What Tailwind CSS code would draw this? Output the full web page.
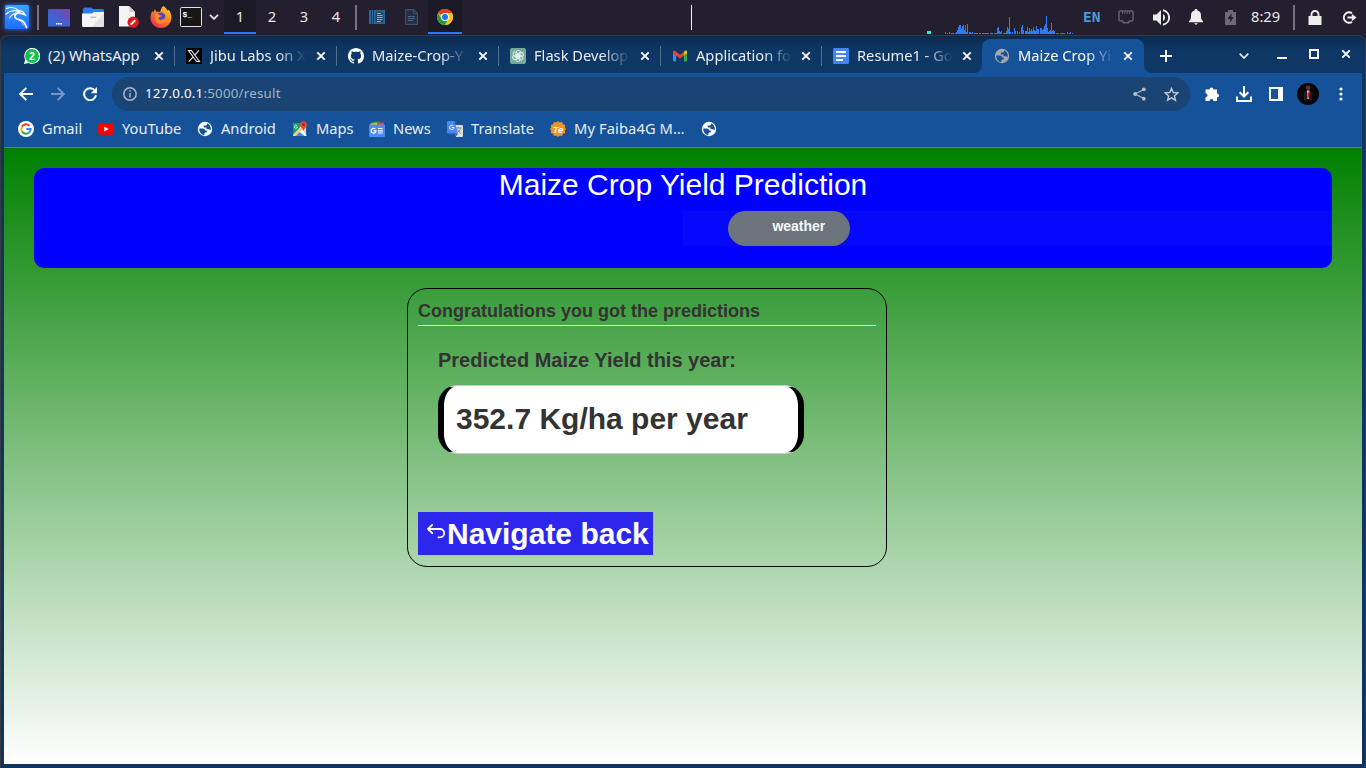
<!DOCTYPE html>
<html lang="en">
<head>
<meta charset="utf-8">
<title>Maize Crop Yield Prediction</title>
<script src="https://cdn.jsdelivr.net/npm/@tailwindcss/browser@4"></script>
</head>
<body class="w-[1366px] h-[768px] overflow-hidden bg-[#231f2e] font-['Noto_Sans',sans-serif]">
<svg class="hidden">
  <symbol id="close" viewBox="0 0 10 10"><path d="M1.3 1.3l7.4 7.4M8.700 1.300l-7.400 7.400" stroke="#fff" stroke-width="1.9" fill="none"/></symbol>
  <symbol id="globe" viewBox="0 0 16 16"><circle cx="8" cy="8" r="7.200" fill="currentColor"/><path d="M2.200 7.500H6c1.300 0 2.200 1 2.200 2h1.600v1.700c-1.200.2-2 .2-2.300 1.200l-.3 1.800C4.200 13.700 2.200 11 2.200 7.500zM10 2.300c2.400.9 3.900 3.200 3.900 5.700l-.2 1.200c-.8-.8-1.500-1-2.700-1H9.500V6.400H6.800V4.600h1.500c1 0 1.500-.4 1.700-1z" fill="var(--hole)"/></symbol>
  <symbol id="chrome" viewBox="0 0 16 16"><circle cx="8" cy="8" r="8" fill="#fbc116"/><path d="M8 8L1.070 4A8 8 0 0 1 14.930 4H8z" fill="#e33b2e"/><path d="M8 8L4.530 10 1.070 4A8 8 0 0 0 8 16l3.500-6z" fill="#279847"/><path d="M8 4h6.930A8 8 0 0 1 8 16l3.460-6z" fill="#fbc116"/><circle cx="8" cy="8" r="4" fill="#fff"/><circle cx="8" cy="8" r="3" fill="#1a73e8"/></symbol>
</svg>

<!-- Desktop panel -->
<header class="flex h-[35px] items-center text-[14.67px] text-[#e8e8ea]">
  <svg class="ml-[5px] mt-[-2px] w-[24px] h-[24px] shrink-0 shadow-[0_0_5px_#2777ff]" viewBox="0 0 24 24"><defs><linearGradient id="k" x2="0" y2="1"><stop stop-color="#3ba4ff"/><stop offset="1" stop-color="#1b6bff"/></linearGradient></defs><rect width="24" height="24" rx="1.500" fill="url(#k)"/><g fill="none" stroke="#fff" stroke-linecap="round"><path d="M1.500 3.500C6 1.500 11 3 14.500 6.500M1 9c4-3.500 9-4 13-2.300M4.500 13c2-3 5-5.300 9-5.500" stroke-width="1.100"/><path d="M14 5.500l4 1.300 2 3-3-1-3-.800" stroke-width="1.500"/><path d="M13.500 8c-4 .500-5 4.800-1.500 6 3.500 1 7.500 1 9.500 8.500" stroke-width="1.700"/><path d="M12 14c4 1.500 5.500 4 6 6" stroke-width=".8"/></g></svg>
  <i class="ml-[8px] w-[2px] h-[25px] bg-[#77747d]"></i>
  <svg class="ml-[9px] w-[22px] h-[18px] shrink-0" viewBox="0 0 22 18"><defs><linearGradient id="d" x1="0" y1="1" x2="1" y2="0"><stop stop-color="#2b6edb"/><stop offset=".5" stop-color="#4a5dcc"/><stop offset="1" stop-color="#8040a5"/></linearGradient></defs><rect width="22" height="17.500" rx="1" fill="url(#d)"/><path d="M8 14.800h1.500m.7 0h1.500m.7 0h1.500" stroke="#fff" stroke-width="1.400"/></svg>
  <svg class="ml-[12px] w-[22px] h-[21px] shrink-0" viewBox="0 0 22 21"><path d="M1 2a1.500 1.500 0 0 1 1.500-1.500h7l1.500 1.500h9.500a1.500 1.500 0 0 1 1.500 1.500v6H1z" fill="#2c7cf0"/><path d="M0 6.500h10l2-1.500h10v13.500a1.500 1.500 0 0 1-1.500 1.500h-19A1.500 1.500 0 0 1 0 18.500z" fill="#f5f5f5"/><path d="M22 6v12.500a1.500 1.500 0 0 1-1.500 1.500H10z" fill="#e2e2e2"/><path d="M8.500 10.300h5.500" stroke="#b6b6b6" stroke-width="1.300"/></svg>
  <svg class="ml-[14px] mt-[-2px] w-[22px] h-[22px] shrink-0" viewBox="0 0 22 22"><path d="M1 0h10l6 6v14.500H1z" fill="#f4f4f4"/><path d="M11 0l6 6h-6z" fill="#d1d1d1"/><circle cx="15.200" cy="16.200" r="5.700" fill="#d81c1c"/><path d="M12.800 18.600l4.500-4.500" stroke="#fff" stroke-width="2"/></svg>
  <svg class="ml-[10px] mt-[-2px] w-[22px] h-[22px] shrink-0" viewBox="0 0 22 22"><defs><linearGradient id="ff" x1="1" y1="0" x2=".2" y2="1"><stop stop-color="#ffe33b"/><stop offset=".45" stop-color="#ff8b20"/><stop offset="1" stop-color="#f52850"/></linearGradient></defs><path d="M13 0c2 1 3.500 2.500 4.500 4.500L19 4c2.500 4 3 7 2 10.500C19.500 19 15.500 22 11 22 5 22 .5 17.500.5 11.800c0-3 1-5.300 2-6.800l.8 1.500L5 3l1 2.500 4 .5c1-2 1-4 3-6z" fill="url(#ff)"/><circle cx="11" cy="11.300" r="4.700" fill="#5546c8"/><path d="M5 8.500c1.800-1 3.500-.5 5 .7l2 .3c-.5 1.500-2.500 1.300-3.500 2.500-.5 1.500 1.500 2.500 4.500 1.500 2-.8 3-3 2-5.500 3 3 2 8-3 9.500-5 1-8-3-7-9z" fill="#ff8d22"/></svg>
  <svg class="ml-[8px] w-[22px] h-[21px] shrink-0" viewBox="0 0 22 21"><rect x=".5" y=".5" width="21" height="19" rx="1" fill="#171717" stroke="#e3e3e3"/><text x="2.500" y="9.500" font-size="8" font-weight="bold" fill="#fff" font-family="Liberation Mono">$_</text></svg>
  <svg class="ml-[7px] mt-[-1px] w-[10px] h-[6px] shrink-0" viewBox="0 0 10 6"><path d="M1 .8l4 4 4-4" fill="none" stroke="#e8e8e8" stroke-width="1.800"/></svg>
  <div class="ml-[5px] flex h-[34px] self-start text-center leading-[33px]">
    <span class="w-[32px] h-[34px] bg-[#1c1926] border-b-2 border-[#2777ff]">1</span><span class="w-[32px]">2</span><span class="w-[32px]">3</span><span class="w-[32px]">4</span>
  </div>
  <i class="ml-[3px] w-[2px] h-[25px] bg-[#77747d]"></i>
  <svg class="ml-[12px] mt-[-1px] w-[16px] h-[14px] shrink-0" viewBox="0 0 16 14"><path d="M0 0h16v14H0z" fill="#28669c"/><path d="M2.500 0v14M4.500 0v14" stroke="#183b5d"/><path d="M6.500 1.500h8v11h-8z" fill="#20476b"/><path d="M8 3.500h4M8 5.500h5.500M8 7.500h5.500M8 9.500h5.500M8 11.500h4" stroke="#9eafbf" stroke-width=".9"/></svg>
  <svg class="ml-[20px] mt-[-1px] w-[13px] h-[16px] shrink-0" viewBox="0 0 13 16"><path d="M.6.600h8l3.800 4v10.800H.6z" fill="#262d42" stroke="#3b4f70" stroke-width="1.200"/><path d="M8.500.600v4h4" fill="none" stroke="#3b4f70"/><path d="M3 7.500h7M3 9.500h7M3 11.500h5" stroke="#4d688f"/></svg>
  <div class="ml-[10px] w-[34px] h-[34px] self-start bg-[#1c1926] border-b-2 border-[#2777ff] flex items-center justify-center pt-[2px]"><svg class="w-[16px] h-[16px]"><use href="#chrome"/></svg></div>
  <i class="ml-[229px] w-px h-[25px] bg-[#f2f2f2]"></i>
  <svg class="ml-[233px] w-[150px] h-[35px] shrink-0" viewBox="925 0 150 35"><path d="M927 31h4v3h-4z" fill="#17f5e0"/><path d="M945.500 34v-2M947.500 34v-1M949.500 34v-2M951.500 34v-1M952.500 34v-1M953.500 34v-1M955.500 34v-1M956.500 34v-2M957.500 34v-4M958.500 34v-7M959.500 34v-9M960.500 34v-9M961.500 34v-5M962.500 34v-8M963.500 34v-9M964.500 34v-4M965.500 34v-9M966.500 34v-2M967.500 34v-10M969.500 34v-2M970.500 34v-2M971.500 34v-1M972.500 34v-2M974 33.500h4M979 33.500h2M982 33.500h7M990 33.500h3M994 33.500h3M997.500 34v-6M998.500 34v-7M999.500 34v-3M1000.500 34v-2M1001.500 34v-3M1003 33.500h4M1006.500 34v-3M1007.500 34v-7M1008.500 34v-5M1009.500 34v-17M1010.500 34v-2M1012.500 34v-2M1014.500 34v-6M1015.500 34v-3M1017.500 34v-3M1019.500 34v-2M1021.500 34v-7M1022.500 34v-9M1023.500 34v-4M1025.500 34v-3M1026.500 34v-3M1027.500 34v-7M1028.500 34v-2M1029.500 34v-6M1030.500 34v-3M1031.500 34v-5M1032.500 34v-3M1033.500 34v-7M1034.500 34v-4M1035.500 34v-3M1036.500 34v-8M1037.500 34v-5M1038.500 34v-5M1040.500 34v-6M1041.500 34v-6M1042.500 34v-4M1043.500 34v-5M1044.500 34v-8M1045.500 34v-10M1046.500 34v-18M1047.500 34v-6M1048.500 34v-2M1049.500 34v-3M1050.500 34v-4M1051.500 34v-11M1052.500 34v-3M1053.500 34v-4M1054.500 34v-3M1056 33.500h3M1060 33.500h5M1067.500 34v-2M1069.500 34v-1M1070.500 34v-2M1072.500 34v-1" stroke="#2b7df5" fill="none"/></svg>
  <span class="ml-[8px] w-[19px] text-[14.500px] font-bold text-[#4b9cd8] font-['DejaVu_Sans_Mono','Liberation_Mono',monospace]">EN</span>
  <svg class="ml-[16px] mt-[-2px] w-[16px] h-[14px] shrink-0" viewBox="0 0 16 14"><path d="M2 1h12a1 1 0 0 1 1 1v8a1 1 0 0 1-1 1h-2.500l-1 1.700h-5l-1-1.700H2a1 1 0 0 1-1-1V2a1 1 0 0 1 1-1z" fill="none" stroke="#64616c" stroke-width="1.500"/><path d="M4.500 1v3M6.800 1v3M9.100 1v3M11.400 1v3" stroke="#64616c"/></svg>
  <svg class="ml-[19px] mt-[-1px] w-[17px] h-[17px] shrink-0" viewBox="0 0 17 17"><path d="M0 5.500h3.500L8 1v15l-4.500-4.500H0z" fill="#eee"/><path d="M10 5a4 4 0 0 1 0 7z" fill="#eee"/><path d="M10 1.300a7.300 7.300 0 0 1 0 14.400" fill="none" stroke="#eee" stroke-width="1.900"/></svg>
  <svg class="ml-[19px] mt-[-2px] w-[14px] h-[16px] shrink-0" viewBox="0 0 14 16"><path d="M7 0c.9 0 1.500.6 1.500 1.400C11 2 12 4 12 6.500 12 10 12.500 11 14 12v1.300H0V12c1.500-1 2-2 2-5.500C2 4 3 2 5.500 1.400 5.500.6 6.100 0 7 0z" fill="#eee"/><path d="M5 14.200h4L7 16z" fill="#eee"/></svg>
  <svg class="ml-[22px] mt-[-1px] w-[11px] h-[15px] shrink-0" viewBox="0 0 11 15"><path d="M3 0h5v2h3v13H0V2h3z" fill="#6e6b75"/><path d="M6.500 3.500L2.500 9h2.500v3.500L8.800 7H6.500z" fill="#231f2e"/></svg>
  <span class="ml-[15px] mt-[-3px] w-[31px]">8:29</span>
  <i class="ml-[11px] w-[2px] h-[25px] bg-[#77747d]"></i>
  <svg class="ml-[13px] mt-[-1px] w-[14px] h-[15px] shrink-0" viewBox="0 0 14 15"><path d="M.5 6h13v9H.5z" fill="#eee"/><path d="M3.500 7V4.500a3.500 3.500 0 0 1 7 0V7" fill="none" stroke="#eee" stroke-width="1.900"/></svg>
  <svg class="ml-[20px] mt-[-1px] w-[15px] h-[13px] shrink-0" viewBox="0 0 15 13"><path d="M10 2.200A5.200 5.200 0 1 0 10 10.800" fill="none" stroke="#eee" stroke-width="2"/><path d="M5.500 6.500h5" stroke="#eee" stroke-width="2"/><path d="M9.800 2.800L14.500 6.500 9.800 10.200z" fill="#eee"/></svg>
</header>

<!-- Browser window -->
<main class="h-[733px] rounded-t-[8px] border-t border-x border-[#373a42] bg-[#0e3561] px-[3px] pb-[4px] flex flex-col">
  <div class="-mx-[3px] flex h-[37px] shrink-0 rounded-t-[8px] bg-linear-to-b from-[#0b2a4f] to-[#0e3765] to-40% pl-[12px] pr-[10px] text-[14.67px] leading-[20px] text-[#e9eef5]">
    <div class="flex w-[162px] items-center pl-[11px] pt-[2px]">
      <svg class="w-[16px] h-[16px] shrink-0" viewBox="0 0 16 16"><path d="M0 16l1.200-4.300A8 8 0 1 1 4.500 15z" fill="#fff"/><circle cx="8" cy="8" r="6.900" fill="#11bf4b"/><text x="5" y="12" font-size="10.500" font-weight="bold" fill="#fff" font-family="Liberation Sans">2</text></svg>
      <span class="-mt-[2px] ml-[8px] w-[96px] whitespace-nowrap">(2) WhatsApp</span><svg class="ml-[10px] w-[10px] h-[10px]"><use href="#close"/></svg><i class="ml-auto w-px h-[20px] bg-[#526f90]"></i>
    </div>
    <div class="flex w-[162px] items-center pl-[11px] pt-[2px]">
      <svg class="w-[16px] h-[16px] shrink-0" viewBox="0 0 16 16"><path d="M0 0h16v16H0z"/><path d="M2.500 2.500h3l8 11h-3zM13 2.300L8.700 7.200M7.400 8.700L2.800 13.700" fill="none" stroke="#eee" stroke-width="1.100"/></svg>
      <span class="-mt-[2px] ml-[8px] w-[96px] whitespace-nowrap mask-r-from-70% mask-r-to-100%">Jibu Labs on X</span><svg class="ml-[10px] w-[10px] h-[10px]"><use href="#close"/></svg><i class="ml-auto w-px h-[20px] bg-[#526f90]"></i>
    </div>
    <div class="flex w-[162px] items-center pl-[11px] pt-[2px]">
      <svg class="w-[16px] h-[16px] shrink-0" viewBox="0 0 16 16"><path fill="#fff" d="M8 0C3.580 0 0 3.580 0 8c0 3.540 2.290 6.530 5.470 7.590.4.070.55-.17.55-.38 0-.19-.01-.82-.01-1.490-2.010.37-2.530-.49-2.690-.94-.09-.23-.48-.94-.82-1.130-.28-.15-.68-.52-.01-.53.63-.01 1.080.58 1.230.82.72 1.210 1.870.87 2.330.66.07-.52.28-.87.51-1.070-1.780-.2-3.640-.89-3.640-3.950 0-.87.31-1.590.82-2.150-.08-.2-.36-1.020.08-2.120 0 0 .67-.21 2.200.82.64-.18 1.320-.27 2-.27s1.360.09 2 .27c1.530-1.040 2.200-.82 2.200-.82.44 1.100.16 1.920.08 2.120.51.56.82 1.270.82 2.150 0 3.070-1.870 3.750-3.650 3.950.29.25.54.73.54 1.480 0 1.070-.01 1.930-.01 2.200 0 .21.15.46.55.38A8.010 8.010 0 0 0 16 8c0-4.420-3.580-8-8-8z"/></svg>
      <span class="-mt-[2px] ml-[8px] w-[96px] whitespace-nowrap mask-r-from-70% mask-r-to-100%">Maize-Crop-Y</span><svg class="ml-[10px] w-[10px] h-[10px]"><use href="#close"/></svg><i class="ml-auto w-px h-[20px] bg-[#526f90]"></i>
    </div>
    <div class="flex w-[162px] items-center pl-[11px] pt-[2px]">
      <svg class="w-[16px] h-[16px] shrink-0" viewBox="0 0 16 16"><rect width="16" height="16" rx="2" fill="#74aa9c"/><g fill="none" stroke="#eef6f4" stroke-width=".9"><path id="p" d="M6 8V4.600A2.400 2.400 0 0 1 10.500 3.700M6 8l3 1.700 3.200-1.800"/><use href="#p" transform="rotate(60 8 8)"/><use href="#p" transform="rotate(120 8 8)"/><use href="#p" transform="rotate(180 8 8)"/><use href="#p" transform="rotate(240 8 8)"/><use href="#p" transform="rotate(300 8 8)"/></g></svg>
      <span class="-mt-[2px] ml-[8px] w-[96px] whitespace-nowrap mask-r-from-70% mask-r-to-100%">Flask Develop</span><svg class="ml-[10px] w-[10px] h-[10px]"><use href="#close"/></svg><i class="ml-auto w-px h-[20px] bg-[#526f90]"></i>
    </div>
    <div class="flex w-[161px] items-center pl-[11px] pt-[2px]">
      <svg class="w-[16px] h-[16px] shrink-0" viewBox="0 0 16 16"><path d="M1 4v8.500a1 1 0 0 0 1 1h2V6z" fill="#4285f4"/><path d="M15 4v8.500a1 1 0 0 1-1 1h-2V6z" fill="#34a853"/><path d="M12 3.500l1.200-.8c.9-.5 1.800 0 1.800 1.100v1.500L12 7.600z" fill="#fbbc04"/><path d="M1 5.300V3.800c0-1.100 1-1.600 1.800-1L8 6.700l4-3v3.900l-4 3-4-3z" fill="#ea4335"/></svg>
      <span class="-mt-[2px] ml-[8px] w-[96px] whitespace-nowrap mask-r-from-70% mask-r-to-100%">Application fo</span><svg class="ml-[9px] w-[10px] h-[10px]"><use href="#close"/></svg><i class="ml-auto w-px h-[20px] bg-[#526f90]"></i>
    </div>
    <div class="flex w-[161px] items-center pl-[11px] pt-[2px]">
      <svg class="w-[16px] h-[16px] shrink-0" viewBox="0 0 16 16"><rect width="16" height="16" rx="1.200" fill="#4285f4"/><path d="M3 4h10M3 8h10M3 12h7" stroke="#fff" stroke-width="1.800"/></svg>
      <span class="-mt-[2px] ml-[8px] w-[96px] whitespace-nowrap mask-r-from-70% mask-r-to-100%">Resume1 - Goo</span><svg class="ml-[9px] w-[10px] h-[10px]"><use href="#close"/></svg>
    </div>
    <div class="relative ml-[-1px] mt-[3px] flex w-[162px] items-center rounded-t-[8px] bg-[#155299] pl-[12px] pb-px">
      <svg class="absolute bottom-0 -left-[8px] w-[8px] h-[8px]" viewBox="0 0 8 8"><path d="M8 0v8H0a8 8 0 0 0 8-8z" fill="#155299"/></svg>
      <svg class="absolute bottom-0 -right-[8px] w-[8px] h-[8px]" viewBox="0 0 8 8"><path d="M0 0v8h8a8 8 0 0 1-8-8z" fill="#155299"/></svg>
      <svg class="w-[16px] h-[16px] shrink-0 text-[#a5a9ae] [--hole:#155299]"><use href="#globe"/></svg>
      <span class="-mt-[2px] ml-[8px] w-[96px] whitespace-nowrap mask-r-from-70% mask-r-to-100% text-white">Maize Crop Yi</span><svg class="ml-[9px] w-[10px] h-[10px]"><use href="#close"/></svg>
    </div>
    <div class="flex grow items-center pt-[3px]">
      <svg class="ml-[16px] w-[12px] h-[12px]" viewBox="0 0 12 12"><path d="M6 0v12M0 6h12" stroke="#fff" stroke-width="2"/></svg>
      <svg class="ml-[67px] w-[10px] h-[6px]" viewBox="0 0 10 6"><path d="M.7.700L5 5 9.300.700" fill="none" stroke="#e8edf4" stroke-width="1.700"/></svg>
      <svg class="ml-[28px] w-[10px] h-[10px]" viewBox="0 0 10 10"><path d="M0 7h10" stroke="#fff" stroke-width="2"/></svg>
      <svg class="ml-[22px] mb-[4px] w-[10px] h-[10px]" viewBox="0 0 10 10"><path d="M1 1h8v8H1z" fill="none" stroke="#fff" stroke-width="2"/></svg>
      <svg class="ml-[22px] mb-[4px] w-[10px] h-[10px]"><use href="#close"/></svg>
    </div>
  </div>

  <div class="flex h-[42px] shrink-0 items-center bg-[#155299]">
    <svg class="ml-[15px] w-[14px] h-[14px]" viewBox="0 0 14 14"><path d="M14 7H1.500M7.300.900L1.200 7l6.100 6.100" fill="none" stroke="#fff" stroke-width="1.900"/></svg>
    <svg class="ml-[18px] w-[14px] h-[14px]" viewBox="0 0 14 14"><path d="M0 7h12.500M6.700.900L12.800 7l-6.100 6.100" fill="none" stroke="#739ac5" stroke-width="1.900"/></svg>
    <svg class="ml-[18px] w-[14px] h-[14px]" viewBox="0 0 14 14"><path d="M12.200 4A6 6 0 1 0 13 8.300" fill="none" stroke="#fff" stroke-width="2"/><path d="M14 0v6.200H7.800z" fill="#fff"/></svg>
    <div class="ml-[15px] flex h-[34px] w-[1078px] items-center rounded-full bg-[#194474] text-[13.33px] tracking-[0.22px]">
      <svg class="ml-[11px] w-[14px] h-[14px]" viewBox="0 0 14 14"><circle cx="7" cy="7" r="6.200" fill="none" stroke="#a9b4c2" stroke-width="1.500"/><path d="M7 6v4.500M7 3.300v1.500" stroke="#a9b4c2" stroke-width="1.500"/></svg>
      <span class="ml-[8px] text-[#a3b4c7]"><span class="text-white">127.0.0.1</span>:5000/result</span>
      <svg class="ml-auto w-[13px] h-[14px]" viewBox="0 0 13 14"><path d="M11 2.500L2 7l9 4.500" fill="none" stroke="#a9b4c2" stroke-width="1.300"/><circle cx="10.800" cy="2.300" r="1.900" fill="#b7bec8"/><circle cx="2.100" cy="7" r="1.900" fill="#b7bec8"/><circle cx="10.800" cy="11.700" r="1.900" fill="#b7bec8"/></svg>
      <svg class="ml-[18px] mr-[11px] w-[15px] h-[15px]" viewBox="0 0 15 15"><path d="M7.500 1.500l1.800 4 4.500.4-3.400 3 1 4.300-3.900-2.300-3.900 2.300 1-4.300-3.400-3 4.500-.4z" fill="none" stroke="#c4cad2" stroke-width="1.400"/></svg>
    </div>
    <svg class="ml-[14px] w-[16px] h-[16px]" viewBox="0 0 16 16"><path d="M1.500 3.500h4a2 2 0 1 1 4 0H13v4a2 2 0 1 1 0 4V15H9.500a2 2 0 0 0-4 0h-4v-3.700a2 2 0 0 0 0-4z" fill="#fff"/></svg>
    <svg class="ml-[16px] w-[16px] h-[16px]" viewBox="0 0 16 16"><path d="M8 0v10M3.700 6.200L8 10.500l4.300-4.300M1 10.500V15h14v-4.500" fill="none" stroke="#fff" stroke-width="2"/></svg>
    <svg class="ml-[17px] w-[14px] h-[14px]" viewBox="0 0 14 14"><path d="M1 1h12v12H1z" fill="none" stroke="#fff" stroke-width="2"/><path d="M9 1h4v12H9z" fill="#fff"/></svg>
    <svg class="ml-[14px] w-[22px] h-[22px]" viewBox="0 0 22 22"><circle cx="11" cy="11" r="11" fill="#080606"/><path d="M7 9l3-1.500h2.500L15.500 9l-.5 8H7z" fill="#211c22"/><path d="M9.800 7.500h2.600L11.800 16h-1.300z" fill="#dadada"/><path d="M10.700 8.500h1l.5 5-1 1.500-1-1.500z" fill="#d42327"/><circle cx="11.100" cy="4.700" r="2.300" fill="#5b3427"/></svg>
    <svg class="ml-[20px] w-[4px] h-[14px]" viewBox="0 0 4 14"><circle cx="2" cy="2" r="1.600" fill="#fff"/><circle cx="2" cy="7" r="1.600" fill="#fff"/><circle cx="2" cy="12" r="1.600" fill="#fff"/></svg>
  </div>

  <nav class="flex h-[33px] shrink-0 items-center border-b border-[#4a7cb3] bg-[#155299] pb-[5px] text-[14.67px] leading-[20px] whitespace-nowrap text-[#e9eef5] pl-[14px]">
    <div class="flex w-[80px] items-center gap-[8px]"><svg class="w-[16px] h-[16px] shrink-0" viewBox="0 0 16 16"><circle cx="8" cy="8" r="8" fill="#fff"/><g fill="none" stroke-width="2.100"><path d="M11.500 4.800A4.700 4.700 0 0 0 3.900 5.800" stroke="#ea4335"/><path d="M3.900 5.800a4.700 4.700 0 0 0 0 4.500" stroke="#fbbc05"/><path d="M3.900 10.300a4.700 4.700 0 0 0 7.200 1.200" stroke="#34a853"/><path d="M11.100 11.500A4.700 4.700 0 0 0 12.700 8H8.200" stroke="#4285f4"/></g></svg><span class="-mt-px">Gmail</span></div>
    <div class="flex w-[99px] items-center gap-[8px]"><svg class="w-[16px] h-[16px] shrink-0" viewBox="0 0 16 16"><rect y="2.300" width="16" height="11.500" rx="2.500" fill="#f00"/><path d="M6.300 5.500v5L10.700 8z" fill="#fff"/></svg><span class="-mt-px">YouTube</span></div>
    <div class="flex w-[95px] items-center gap-[8px]"><svg class="w-[16px] h-[16px] shrink-0 text-white [--hole:#155299]"><use href="#globe"/></svg><span class="-mt-px">Android</span></div>
    <div class="flex w-[77px] items-center gap-[8px]"><svg class="w-[16px] h-[16px] shrink-0" viewBox="0 0 16 16"><path d="M1 2h13v13H1z" fill="#d9dde0"/><path d="M1 2h11L1 14z" fill="#20a05b"/><path d="M1.500 15L14 3l.5 2L4.500 15z" fill="#f6cf45"/><path d="M4 15l4-4 4.500 4z" fill="#4285f4"/><path d="M8 11l2-2 4.500 5v1h-2z" fill="#fff"/><path d="M4.800 4.500a1.500 1.500 0 1 0 .7 1.500H4.500" fill="none" stroke="#fff" stroke-width=".8"/><path d="M11.500.300a3.300 3.300 0 0 1 3.300 3.400c0 2.500-2.600 3.300-3.300 6.300-.7-3-3.300-3.800-3.300-6.300A3.300 3.300 0 0 1 11.500.300z" fill="#ea4335"/><circle cx="11.500" cy="3.600" r="1.200" fill="#8c1d18"/></svg><span class="-mt-px">Maps</span></div>
    <div class="flex w-[78px] items-center gap-[8px]"><svg class="w-[16px] h-[16px] shrink-0" viewBox="0 0 16 16"><path d="M2 1l9-1v5H2z" fill="#0c9d58"/><path d="M5 2l10-.5V6H5z" fill="#ea4335"/><path d="M1 3l7-1.500V6H1z" fill="#fbbc04"/><rect y="3.500" width="16" height="12.500" rx="1" fill="#4d8cf5"/><path d="M6.300 8A2.400 2.400 0 1 0 7 9.900H4.800M9 7.500h4.500M9 9.800h5M9 12h4.500" stroke="#fff" stroke-width="1.200" fill="none"/></svg><span class="-mt-px">News</span></div>
    <div class="flex w-[103px] items-center gap-[8px]"><svg class="w-[16px] h-[16px] shrink-0" viewBox="0 0 16 16"><path d="M7 4h8a1 1 0 0 1 1 1v10a1 1 0 0 1-1 1H9z" fill="#dedede"/><path d="M9 7h5.500M11.700 6v1M13.500 7.500c-.5 2-2 3.500-3 4M10.500 8.500c1 2 2 3 3.500 4" stroke="#6f7b87" stroke-width=".9" fill="none"/><path d="M1 0h6.500l3.500 12.500H1a1 1 0 0 1-1-1V1a1 1 0 0 1 1-1z" fill="#4a86f0"/><path d="M6.300 4.800a2.200 2.200 0 1 0 .7 1.700H4.800" fill="none" stroke="#fff"/><path d="M8 12.500h3L9.500 15z" fill="#2158b8"/></svg><span class="-mt-px">Translate</span></div>
    <div class="flex w-[151px] items-center gap-[8px]"><svg class="w-[16px] h-[16px] shrink-0" viewBox="0 0 16 16"><path d="M8 0l1.800 1.600 2.300-.6.800 2.300 2.300.7-.5 2.300L16 8l-1.300 1.700.5 2.300-2.300.7-.8 2.300-2.300-.6L8 16l-1.800-1.600-2.300.6-.8-2.300L.8 12l.5-2.300L0 8l1.300-1.700L.8 4l2.300-.7.800-2.300 2.300.6z" fill="#f7941d"/><text x="2.700" y="11.500" font-size="9.500" font-weight="bold" font-style="italic" fill="#fff" font-family="Liberation Sans" textLength="10.500">Te</text></svg><span class="-mt-px tracking-[0.12px]">My Faiba4G M…</span></div>
    <svg class="w-[16px] h-[16px] shrink-0 text-white [--hole:#155299]"><use href="#globe"/></svg>
  </nav>

  <!-- Page -->
  <section class="grow bg-linear-to-b/srgb from-[#008000] to-white px-[30px] pt-[20px] font-['Liberation_Sans',Arial,sans-serif]">
    <div class="h-[100px] rounded-[10px] bg-[#0000ff]">
      <h1 class="h-[43px] text-center text-[30px] leading-[34px] text-white">Maize Crop Yield Prediction</h1>
      <div class="ml-[649px] h-[35px] bg-[#0508fa] pl-[45px]">
        <div class="h-[35px] w-[122px] rounded-[20px] bg-[#6c757d] pl-[44.400px] text-[14px] font-bold leading-[31px] text-[#f8f9fa]">weather</div>
      </div>
    </div>
    <div class="mt-[20px] ml-[373px] h-[279px] w-[480px] rounded-[20px] border border-black px-[10px] text-[#333] font-bold">
      <h2 class="h-[37px] w-[458px] border-b border-[#dff0df] pt-[11px] text-[18px] leading-[22px]">Congratulations you got the predictions</h2>
      <div class="ml-[20px]">
        <p class="pt-[22px] text-[20px] leading-[24px]">Predicted Maize Yield this year:</p>
        <div class="mt-[13px] h-[69px] w-[366px] rounded-[20px] border-x-[6px] border-y border-x-black border-y-[#ccc] bg-white pl-[12px] text-[30px] leading-[66px]">352.7 Kg/ha per year</div>
      </div>
      <div class="mt-[58px] flex h-[43px] w-[235px] bg-[#2d27ee] pl-[9px] text-[30px] leading-[43px] text-white whitespace-nowrap">
        <svg class="mt-[12px] mr-[2px] w-[18px] h-[15px] shrink-0" viewBox="0 0 18 15"><path d="M5.200.900L1 5l4.200 4.200M1 5h12a3.900 3.900 0 0 1 0 8.300h-1.500" fill="none" stroke="#fff" stroke-width="1.800" stroke-linecap="round" stroke-linejoin="round"/></svg>Navigate back
      </div>
    </div>
  </section>
</main>
</body>
</html>
